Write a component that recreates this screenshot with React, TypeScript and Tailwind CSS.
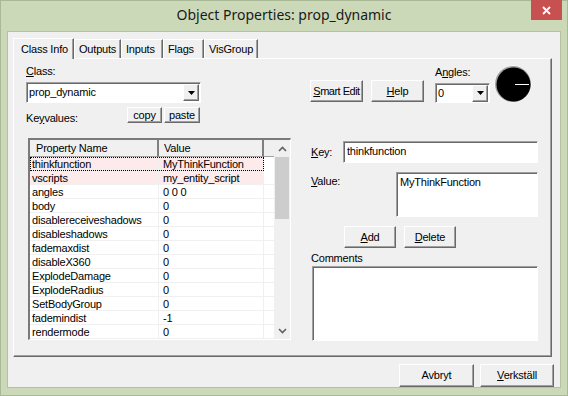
import React from 'react';

const rows: [string, string][] = [
  ['thinkfunction', 'MyThinkFunction'],
  ['vscripts', 'my_entity_script'],
  ['angles', '0 0 0'],
  ['body', '0'],
  ['disablereceiveshadows', '0'],
  ['disableshadows', '0'],
  ['fademaxdist', '0'],
  ['disableX360', '0'],
  ['ExplodeDamage', '0'],
  ['ExplodeRadius', '0'],
  ['SetBodyGroup', '0'],
  ['fademindist', '-1'],
  ['rendermode', '0'],
];

const Btn: React.FC<{ className?: string; children: React.ReactNode }> = ({ className = '', children }) => (
  <div className={`flex items-center justify-center whitespace-nowrap bg-[#f0f0f0] border border-t-white border-l-white border-r-[#696969] border-b-[#696969] shadow-[inset_-1px_-1px_#a0a0a0] ${className}`}>
    <span>{children}</span>
  </div>
);

const Sunken: React.FC<{ className?: string; children?: React.ReactNode }> = ({ className = '', children }) => (
  <div className={`bg-white border border-t-[#a0a0a0] border-l-[#a0a0a0] border-r-white border-b-white shadow-[inset_1px_1px_#696969] ${className}`}>
    {children}
  </div>
);

const DropArrow = () => (
  <div className="w-[16px] h-[17px] flex items-center justify-center bg-[#f0f0f0] border border-t-white border-l-white border-r-[#696969] border-b-[#696969] shadow-[inset_-1px_-1px_#a0a0a0]">
    <svg width="7" height="4" viewBox="0 0 7 4"><polygon points="0,0 7,0 3.5,4" fill="#000" /></svg>
  </div>
);

const Combo: React.FC<{ value: string; className?: string }> = ({ value, className = '' }) => (
  <Sunken className={`flex items-center justify-between pl-[2px] pr-[1px] ${className}`}>
    <span>{value}</span>
    <DropArrow />
  </Sunken>
);

const Chevron: React.FC<{ up?: boolean }> = ({ up }) => (
  <svg width="9" height="6" viewBox="0 0 9 6">
    <polyline points={up ? '1,5 4.5,1.5 8,5' : '1,1 4.5,4.5 8,1'} fill="none" stroke="#606060" strokeWidth="1.6" />
  </svg>
);

const PropertyList = () => (
  <div className="mt-[15px] ml-[2px] w-[263px] h-[202px] flex bg-white border-l-2 border-t-2 border-r border-b border-l-[#7a7a7a] border-t-[#7a7a7a] border-r-white border-b-white">
    <div className="w-[244px] flex flex-col">
      <div className="flex h-[18px] bg-[#f0f0f0]">
        <div className="w-[129px] pl-[6px] flex items-center border-r-2 border-r-[#808080] border-b border-b-[#a0a0a0]">Property Name</div>
        <div className="w-[105px] pl-[5px] flex items-center border-r-2 border-r-[#808080] border-b border-b-[#a0a0a0]">Value</div>
        <div className="flex-1 border-b border-b-[#a0a0a0]" />
      </div>
      {rows.map(([k, v], i) => (
        <div key={k} className={`flex h-[14px] leading-[13px] ${i < 2 ? 'bg-[#fdeaea]' : ''} ${i === 0 ? 'outline-1 outline-dotted outline-black -outline-offset-1 mr-[10px]' : ''}`}>
          <div className="w-[129px] pl-[2px] pt-[1px] border-r border-b border-[#f0f0f0] whitespace-nowrap overflow-hidden">{k}</div>
          <div className={`${i === 0 ? 'w-[105px] border-r-0' : 'w-[105px] border-r'} pl-[4px] pt-[1px] border-b border-[#f0f0f0] whitespace-nowrap overflow-hidden`}>{v}</div>
          {i !== 0 && <div className="flex-1 border-b border-[#f0f0f0] bg-white" />}
        </div>
      ))}
    </div>
    <div className="flex-1 flex flex-col bg-[#f0f0f0]">
      <div className="h-[17px] flex items-center justify-center"><Chevron up /></div>
      <div className="h-[62px] mx-[1px] bg-[#cdcdcd]" />
      <div className="flex-1" />
      <div className="h-[17px] flex items-center justify-center"><Chevron /></div>
    </div>
  </div>
);

const tabs = ['Outputs', 'Inputs', 'Flags', 'VisGroup'];
const tabWidths = ['w-[47px]', 'w-[42px]', 'w-[41px]', 'w-[54px]'];

export default function App() {
  return (
    <div className="w-[568px] h-[396px] bg-[#ccd9b9] border border-[#a9b995] flex flex-col font-['Liberation_Sans',Arial,sans-serif] text-[11px] tracking-[-0.2px] text-black leading-[13px]">
      <div className="h-[30px] grid grid-cols-[1fr_auto_1fr]">
        <div />
        <div className="font-['Noto_Sans',sans-serif] text-[14px] tracking-normal text-[#1a1a1a] pt-[4px] leading-[20px]">Object Properties: prop_dynamic</div>
        <div className="flex justify-end pr-[5px]">
          <div className="w-[31px] h-[20px] -mt-px bg-[#c75050] flex items-center justify-center">
            <svg width="9" height="9" viewBox="0 0 9 9"><path d="M1 1L8 8M8 1L1 8" stroke="#fff" strokeWidth="1.8" /></svg>
          </div>
        </div>
      </div>
      <div className="flex-1 mx-[6px] mb-[7px] bg-[#f0f0f0] border border-[#b4c2a0] flex flex-col">
        <div className="flex items-end h-[21px] mt-[6px] pl-[5px] relative z-10 -mb-px">
          <div className="w-[61px] h-[21px] pl-[7px] pt-[4px] bg-[#f0f0f0] border-t border-l border-white border-r border-r-[#696969] shadow-[inset_-1px_0_#a0a0a0]">Class Info</div>
          {tabs.map((t, i) => (
            <div key={t} className={`${tabWidths[i]} h-[19px] pl-[4px] pt-[3px] border-t border-l border-white border-r border-r-[#696969] shadow-[inset_-1px_0_#a0a0a0] mb-px`}>{t}</div>
          ))}
        </div>
        <div className="ml-[5px] w-[539px] h-[299px] border border-t-white border-l-white border-r-[#696969] border-b-[#696969] shadow-[inset_-1px_-1px_#a0a0a0] flex pl-[12px]">
          <div className="w-[265px] flex flex-col">
            <div className="mt-[6px]"><span className="underline">C</span>lass:</div>
            <Combo value="prop_dynamic" className="mt-[4px] w-[175px] h-[21px]" />
            <div className="mt-[4px] flex h-[16px]">
              <div className="w-[101px] pt-[5px]">Ke<span className="underline">y</span>values:</div>
              <Btn className="w-[35px] h-[16px]">copy</Btn>
              <Btn className="ml-[2px] w-[36px] h-[16px]">paste</Btn>
            </div>
            <PropertyList />
          </div>
          <div className="ml-[19px] w-[228px] flex flex-col">
            <div className="flex items-start h-[44px]">
              <Btn className="mt-[21px] w-[53px] h-[22px] tracking-[-0.5px]"><span className="underline">S</span>mart Edit</Btn>
              <Btn className="mt-[21px] ml-[8px] w-[53px] h-[22px]"><span className="underline">H</span>elp</Btn>
              <div className="ml-[11px] w-[55px] mt-[7px] flex flex-col">
                <div>A<span className="underline">n</span>gles:</div>
                <Combo value="0" className="mt-[4px] h-[20px]" />
              </div>
              <svg className="ml-[4px] mt-[6px]" width="38" height="38" viewBox="0 0 38 38">
                <circle cx="19" cy="19" r="18.5" fill="#fff" />
                <circle cx="19" cy="19" r="18" fill="#a0a0a0" />
                <circle cx="19.5" cy="19.5" r="17" fill="#000" />
                <line x1="21" y1="19.5" x2="35" y2="19.5" stroke="#fff" strokeWidth="1" />
              </svg>
            </div>
            <div className="mt-[38px] flex items-center h-[22px]">
              <div className="w-[33px] pl-[1px]"><span className="underline">K</span>ey:</div>
              <Sunken className="w-[195px] h-[22px] pl-[3px] pt-[3px]">thinkfunction</Sunken>
            </div>
            <div className="mt-[9px] flex h-[45px]">
              <div className="w-[86px] pl-[1px] pt-[3px]"><span className="underline">V</span>alue:</div>
              <Sunken className="w-[142px] h-[45px] pl-[3px] pt-[3px]">MyThinkFunction</Sunken>
            </div>
            <div className="mt-[9px] flex pl-[34px]">
              <Btn className="w-[52px] h-[22px]"><span className="underline">A</span>dd</Btn>
              <Btn className="ml-[8px] w-[52px] h-[22px]"><span className="underline">D</span>elete</Btn>
            </div>
            <div className="mt-[4px] pl-[1px]">Comments</div>
            <Sunken className="mt-[1px] ml-[2px] w-[226px] h-[75px]" />
          </div>
        </div>
        <div className="mt-[7px] flex justify-end pr-[6px]">
          <Btn className="w-[75px] h-[23px]">Avbryt</Btn>
          <Btn className="ml-[6px] w-[74px] h-[23px]"><span className="underline">V</span>erkställ</Btn>
        </div>
      </div>
    </div>
  );
}
